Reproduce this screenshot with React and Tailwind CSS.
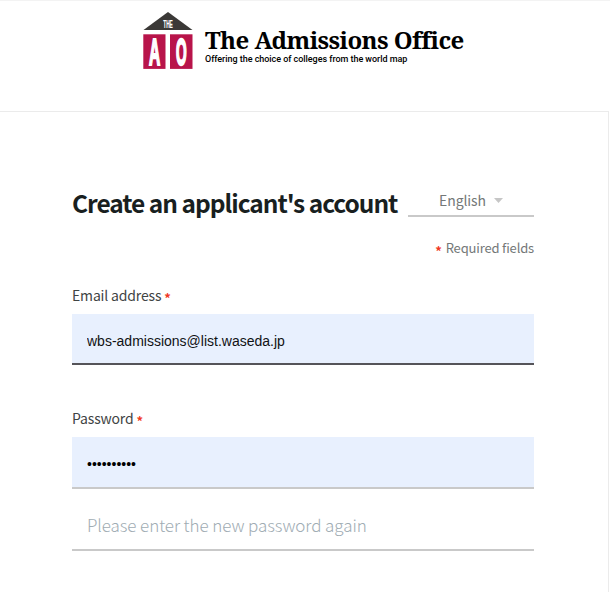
import React, { useState } from "react";

const Logo = () => (
  <svg width="52" height="60" viewBox="0 0 52 60" className="block shrink-0">
    <polygon points="25,0 49.5,18 0.5,18" fill="#3b3937" />
    <rect x="0.3" y="22.3" width="22.2" height="34.6" fill="#b8144a" />
    <rect x="27" y="22.3" width="22.5" height="34.6" fill="#b8144a" />
    <g
      fill="#fff"
      stroke="#fff"
      fontFamily="'Liberation Sans', sans-serif"
      fontWeight="700"
      textAnchor="middle"
    >
      <text
        transform="translate(25 15.6) scale(0.42 1)"
        fontSize="11.5"
        strokeWidth="0.2"
      >
        THE
      </text>
      <text
        transform="translate(11.6 53) scale(0.42 1)"
        fontSize="37"
        strokeWidth="2.2"
      >
        A
      </text>
      <text
        transform="translate(38.2 52.7) scale(0.38 1)"
        fontSize="36"
        strokeWidth="2.4"
      >
        O
      </text>
    </g>
  </svg>
);

const Required = () => (
  <span className="mr-1 pt-[4px] text-[13px] leading-none font-bold text-[#f03a24]">
    *
  </span>
);

const Label = ({ children }) => (
  <div className="flex h-6 items-center gap-[3px] text-[14px] leading-6 tracking-[-0.16px] text-[#3f4444]">
    {children}
    <Required />
  </div>
);

const App = () => {
  const [email, setEmail] = useState("wbs-admissions@list.waseda.jp");
  const [password, setPassword] = useState("password12");
  const [confirm, setConfirm] = useState("");

  return (
    <div className="h-[592px] w-[610px] overflow-hidden bg-white font-['Noto_Sans_CJK_JP','Source_Sans_Pro',sans-serif]">
      <header className="flex h-[111px] border-t border-[#f3f3f3] pt-[11px] pl-[143px]">
        <Logo />
        <div className="pt-[13px] pl-[10px] whitespace-nowrap text-black">
          <h1 className="font-['Noto_Serif','DejaVu_Serif_Condensed','DejaVu_Serif',serif] text-[24px] leading-[29px] font-bold tracking-[-0.55px]">
            The Admissions Office
          </h1>
          <p className="font-[Roboto,sans-serif] text-[9px] leading-[10px] font-medium tracking-[-0.04px]">
            Offering the choice of colleges from the world map
          </p>
        </div>
      </header>

      <main className="h-[481px] w-[609px] border-t border-r border-[#ebebeb] pt-[72px] pr-[74px] pl-[72px]">
        <div className="flex h-[33px] justify-between">
          <h2 className="pt-[3px] text-[24.5px] leading-[32px] font-bold tracking-[-1.02px] whitespace-nowrap text-[#191f1f]">
            Create an applicant's account
          </h2>
          <button className="flex h-[33px] w-[126px] shrink-0 items-center justify-center gap-2 border-b-2 border-[#c9c9c9] pt-[2px] text-[14px] tracking-[-0.1px] text-[#747878]">
            English
            <svg width="9" height="5" viewBox="0 0 9 5">
              <polygon points="0,0 9,0 4.5,5" fill="#c6c6c6" />
            </svg>
          </button>
        </div>

        <div className="mt-[19px] flex h-6 items-center justify-end text-[13px] leading-6 tracking-[-0.16px] text-[#747878]">
          <Required />
          Required fields
        </div>

        <div className="mt-[23px]">
          <Label>Email address</Label>
          <input
            type="text"
            value={email}
            onChange={(e) => setEmail(e.target.value)}
            className="mt-[7px] block h-[51px] w-full border-b-2 border-[#555459] bg-[#e8f0fe] px-[15px] pt-[5px] font-['Liberation_Sans',sans-serif] text-sm text-[#101214] outline-none"
          />
        </div>

        <div className="mt-[41px]">
          <Label>Password</Label>
          <input
            type="password"
            value={password}
            onChange={(e) => setPassword(e.target.value)}
            className="mt-[7px] block h-[52px] w-full border-b-2 border-[#c9c9c9] bg-[#e8f0fe] px-[15px] pt-1 font-['Liberation_Sans',sans-serif] text-sm text-black outline-none"
          />
          <input
            type="password"
            placeholder="Please enter the new password again"
            value={confirm}
            onChange={(e) => setConfirm(e.target.value)}
            className="mt-[10px] block h-[52px] w-full border-b-2 border-[#c9c9c9] px-[15px] pt-px text-[17px] font-light tracking-[-0.08px] outline-none placeholder:text-[#a0acb3]"
          />
        </div>
      </main>
    </div>
  );
};

export default App;
